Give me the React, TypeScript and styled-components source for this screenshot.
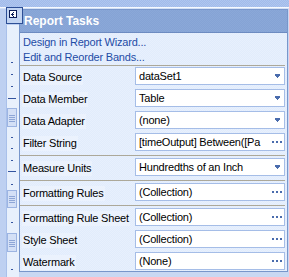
import React from 'react';
import styled, { createGlobalStyle } from 'styled-components';

const Global = createGlobalStyle`
  html, body { margin: 0; padding: 0; }
  body { background: #c9d8f3; font-family: "Liberation Sans", Arial, sans-serif; }
`;

const Stage = styled.div`
  position: relative;
  width: 289px;
  height: 277px;
  overflow: hidden;
  background: #c9d8f3;
  display: flex;
  flex-direction: column;
`;

const TopRuler = styled.div`
  flex: none;
  height: 7px;
  background: repeating-conic-gradient(#a2bbea 0 25%, #afc6ef 0 50%) 0 0 / 2px 2px;
  border-bottom: 1px solid #f6f9fe;
`;

const TopGap = styled.div`
  flex: none;
  height: 1px;
  background: #d3e0f6;
`;

const Main = styled.div`
  flex: 1;
  display: flex;
  align-items: flex-start;
`;

const RulerSlot = styled.div`
  flex: none;
  width: 19px;
  height: 268px;
  svg { display: block; }
`;

const Panel = styled.div`
  flex: none;
  width: 269px;
  height: 263px;
  box-sizing: border-box;
  border: 1px solid #7896cb;
  overflow: hidden;
  display: flex;
  flex-direction: column;
  background: repeating-conic-gradient(#e1ecfc 0 25%, #e8f0fd 0 50%) 0 0 / 2px 2px;
`;

const Header = styled.div`
  flex: none;
  height: 22px;
  border-bottom: 1px solid #6d8bc1;
  background: repeating-conic-gradient(#85a3d5 0 25%, #8ba8d8 0 50%) 0 0 / 2px 2px;
  color: #ffffff;
  font-weight: bold;
  font-size: 12px;
  display: flex;
  align-items: center;
  padding-left: 4px;
`;

const Links = styled.div`
  display: flex;
  flex-direction: column;
  align-items: flex-start;
  padding: 2px 3px 0;
`;

const ActionLink = styled.a`
  color: #1f4ca6;
  font-size: 11px;
  letter-spacing: -0.2px;
  line-height: 15px;
  text-decoration: none;
  cursor: pointer;
`;

const Separator = styled.div`
  flex: none;
  height: 1px;
  margin-right: 2px;
  background: #aca899;
`;

const GroupSeparator = styled.div`
  flex: none;
  height: 1px;
  margin: 1px 2px 1px 0;
  background: #aca899;
`;

const Group = styled.div`
  display: flex;
  flex-direction: column;
`;

const Row = styled.div`
  flex: none;
  height: 22px;
  display: grid;
  grid-template-columns: 115px 150px;
  align-items: start;
`;

const Label = styled.div`
  align-self: center;
  justify-self: start;
  margin-left: 2px;
  padding: 0 1px;
  font-size: 11px;
  letter-spacing: -0.2px;
  line-height: 15px;
  color: #000;
  background: #ebf2fd;
  white-space: nowrap;
`;

const Field = styled.div<{ $kind: 'drop' | 'dots' }>`
  margin-top: 1px;
  height: 18px;
  box-sizing: border-box;
  border: 1px solid #a5bde7;
  background: #ffffff;
  display: flex;
  align-items: center;
  padding: 0 ${p => (p.$kind === 'drop' ? 4 : 2)}px 0 3px;
  gap: 4px;
  font-size: 11px;
  letter-spacing: -0.2px;
  color: #000;
`;

const Value = styled.span`
  flex: 1;
  min-width: 0;
  white-space: nowrap;
`;

const TagButton = styled.div`
  position: absolute;
  left: 6px;
  top: 7px;
  width: 17px;
  height: 17px;
  svg { display: block; }
`;

const ICON = '#4a6cad';

const DropArrow = () => (
  <svg width="5" height="4" viewBox="0 0 5 4" shapeRendering="crispEdges">
    <rect x="0" y="0" width="5" height="1" fill={ICON} />
    <rect x="0" y="1" width="5" height="1" fill={ICON} />
    <rect x="1" y="2" width="3" height="1" fill={ICON} />
    <rect x="2" y="3" width="1" height="1" fill={ICON} />
  </svg>
);

const Dots = () => (
  <svg width="10" height="2" viewBox="0 0 10 2" shapeRendering="crispEdges">
    <rect x="0" y="0" width="2" height="2" fill={ICON} />
    <rect x="4" y="0" width="2" height="2" fill={ICON} />
    <rect x="8" y="0" width="2" height="2" fill={ICON} />
  </svg>
);

const ticks = [62, 74, 86, 137, 148, 160, 184, 222, 269];
const longTicks = [98, 171];
const grips = [
  [108, 19],
  [190, 18],
  [233, 19],
];

const Ruler = () => (
  <svg width="19" height="268" viewBox="0 0 19 268" shapeRendering="crispEdges">
    <rect x="0" y="0" width="19" height="268" fill="#bed0f1" />
    <rect x="6" y="16" width="13" height="252" fill="#e8f0fc" />
    <rect x="6" y="16" width="1" height="252" fill="#a9c0ea" />
    {ticks.map(y => (
      <rect key={y} x="11" y={y - 9} width="2" height="1" fill="#34549f" />
    ))}
    {longTicks.map(y => (
      <rect key={y} x="8" y={y - 9} width="8" height="1" fill="#34549f" />
    ))}
    {grips.map(([y, h]) => (
      <g key={y}>
        <rect x="7.5" y={y - 9 + 0.5} width="9" height={h - 1} fill="#d4e0f6" stroke="#9cb4e2" />
        {[0, 2, 4, 6].map(o => (
          <rect key={o} x="9" y={y - 9 + h / 2 - 3 + o} width="6" height="1" fill="#8ea6d6" />
        ))}
      </g>
    ))}
  </svg>
);

const SmartTag = () => (
  <svg width="17" height="17" viewBox="0 0 17 17" shapeRendering="crispEdges">
    <rect x="0.5" y="0.5" width="16" height="16" fill="#c2d4f2" stroke="#2d4f96" />
    <rect x="3.5" y="3.5" width="7" height="7" fill="#ffffff" stroke="#0b1d58" />
    <rect x="7" y="5" width="1" height="1" fill="#0b1d58" />
    <rect x="6" y="6" width="1" height="1" fill="#0b1d58" />
    <rect x="5" y="7" width="1" height="1" fill="#0b1d58" />
    <rect x="6" y="8" width="1" height="1" fill="#0b1d58" />
    <rect x="7" y="9" width="1" height="1" fill="#0b1d58" />
    <rect x="6" y="7" width="2" height="1" fill="#0b1d58" />
  </svg>
);

type Prop = { label: string; value: string; kind: 'drop' | 'dots' };

const groups: Prop[][] = [
  [
    { label: 'Data Source', value: 'dataSet1', kind: 'drop' },
    { label: 'Data Member', value: 'Table', kind: 'drop' },
    { label: 'Data Adapter', value: '(none)', kind: 'drop' },
    { label: 'Filter String', value: '[timeOutput] Between([Pa', kind: 'dots' },
  ],
  [{ label: 'Measure Units', value: 'Hundredths of an Inch', kind: 'drop' }],
  [{ label: 'Formatting Rules', value: '(Collection)', kind: 'dots' }],
  [
    { label: 'Formatting Rule Sheet', value: '(Collection)', kind: 'dots' },
    { label: 'Style Sheet', value: '(Collection)', kind: 'dots' },
    { label: 'Watermark', value: '(None)', kind: 'dots' },
  ],
];

export default function App() {
  return (
    <Stage>
      <Global />
      <TopRuler />
      <TopGap />
      <Main>
        <RulerSlot>
          <Ruler />
        </RulerSlot>
        <Panel>
          <Header>Report Tasks</Header>
          <Links>
            <ActionLink>Design in Report Wizard...</ActionLink>
            <ActionLink>Edit and Reorder Bands...</ActionLink>
          </Links>
          <Separator />
          {groups.map((g, gi) => (
            <React.Fragment key={gi}>
              {gi > 0 && <GroupSeparator />}
              <Group>
                {g.map(p => (
                  <Row key={p.label}>
                    <Label>{p.label}</Label>
                    <Field $kind={p.kind}>
                      <Value>{p.value}</Value>
                      {p.kind === 'drop' ? <DropArrow /> : <Dots />}
                    </Field>
                  </Row>
                ))}
              </Group>
            </React.Fragment>
          ))}
        </Panel>
      </Main>
      <TagButton>
        <SmartTag />
      </TagButton>
    </Stage>
  );
}
